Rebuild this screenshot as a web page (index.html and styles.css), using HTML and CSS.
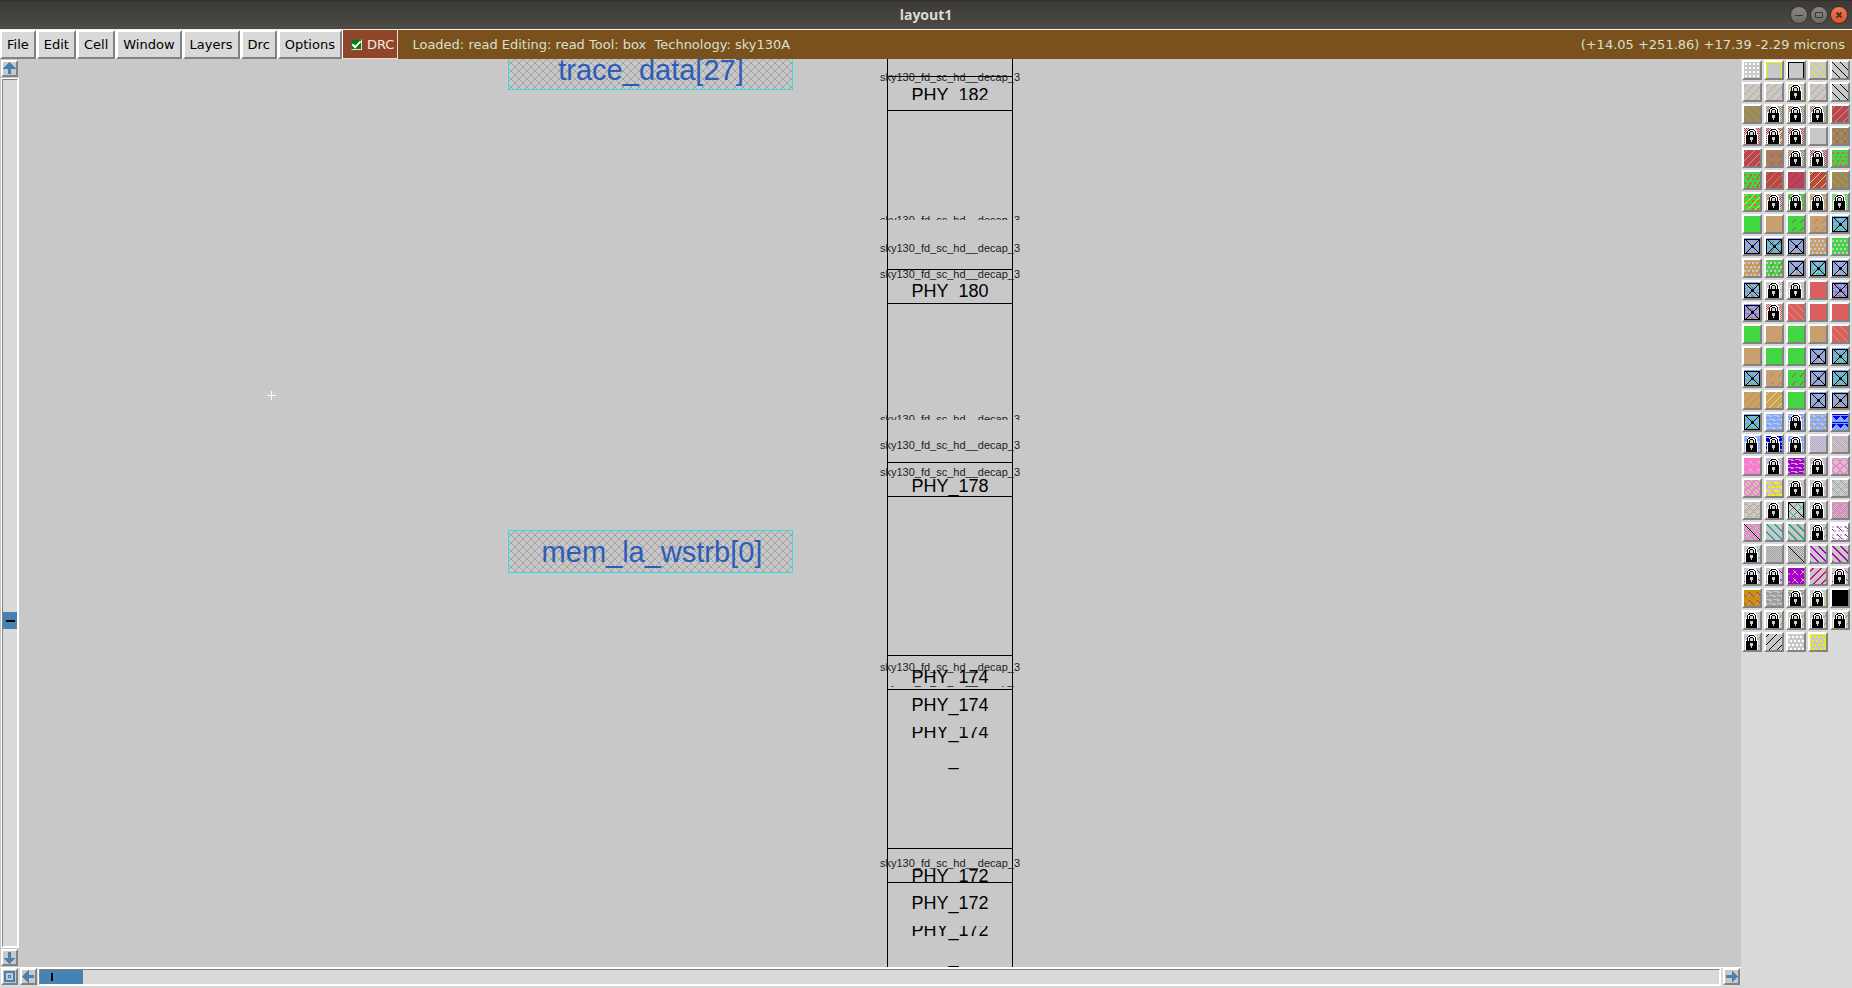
FILE: index.html
```html
<!DOCTYPE html>
<html lang="en">
<head>
<meta charset="utf-8">
<title>layout1</title>
<link rel="stylesheet" href="styles.css">
</head>
<body>
<div class="window">
  <header class="titlebar">
    <h1 class="title">layout1</h1>
    <div class="controls">
      <button class="ctl" aria-label="Minimize"><svg viewBox="0 0 16 16"><path d="M4 8.500H12"/></svg></button>
      <button class="ctl" aria-label="Maximize"><svg viewBox="0 0 16 16"><path d="M4.500 5.500h7v5h-7z"/></svg></button>
      <button class="ctl close" aria-label="Close"><svg viewBox="0 0 16 16"><path d="M5.500 5.500l5 5M10.500 5.500l-5 5"/></svg></button>
    </div>
  </header>
  <nav class="menubar">
    <button class="menu">File</button>
    <button class="menu">Edit</button>
    <button class="menu">Cell</button>
    <button class="menu">Window</button>
    <button class="menu">Layers</button>
    <button class="menu">Drc</button>
    <button class="menu">Options</button>
    <label class="drc"><input type="checkbox" class="check" checked>DRC</label>
    <div class="status"><span>Loaded: read Editing: read Tool: box&nbsp; Technology: sky130A</span><span>(+14.05 +251.86) +17.39 -2.29 microns</span></div>
  </nav>
  <main class="work">
    <section class="view">
      <div class="vscroll">
        <button class="arrow" aria-label="Scroll up"><svg viewBox="0 0 14 14"><path d="M7 0L14 7H9V13H5V7H0z"/></svg></button>
        <div class="trough vtrough"><div class="vthumb"></div></div>
        <button class="arrow" aria-label="Scroll down"><svg viewBox="0 0 14 14"><path d="M7 14L14 7H9V1H5V7H0z"/></svg></button>
      </div>
      <svg class="canvas">
        <defs>
          <pattern id="hatch" width="8" height="8" patternUnits="userSpaceOnUse"><path class="hatch" d="M-1 -1L9 9M9 -1L-1 9"/></pattern>
          <clipPath id="c1"><rect x="860" y="0" width="150" height="41"/></clipPath>
          <clipPath id="c2"><rect x="850" y="140" width="160" height="21"/></clipPath>
          <clipPath id="c3"><rect x="860" y="200" width="150" height="39"/></clipPath>
          <clipPath id="c4"><rect x="850" y="340" width="160" height="21"/></clipPath>
          <clipPath id="c5"><rect x="860" y="600" width="150" height="25"/></clipPath>
          <clipPath id="c6"><rect x="850" y="627" width="160" height="2"/></clipPath>
          <clipPath id="c7"><rect x="860" y="668" width="150" height="20"/></clipPath>
          <clipPath id="c8"><rect x="860" y="708" width="150" height="10"/></clipPath>
          <clipPath id="c9"><rect x="860" y="800" width="150" height="23"/></clipPath>
          <clipPath id="c10"><rect x="860" y="867" width="150" height="20"/></clipPath>
          <clipPath id="c11"><rect x="860" y="905" width="150" height="10"/></clipPath>
        </defs>
        <rect class="net" x="489.5" y="-12.500" width="284" height="43"/>
        <text class="netname" x="632" y="21">trace_data[27]</text>
        <rect class="net" x="489.5" y="471.500" width="284" height="42"/>
        <text class="netname" x="633" y="503">mem_la_wstrb[0]</text>
        <path class="cell" d="M868.500 0V2000M993.500 0V2000M868 17.500H994M868 51.500H994M868 210.500H994M868 244.500H994M868 403.500H994M868 437.500H994M868 596.500H994M868 630.500H994M868 789.500H994M868 823.500H994"/>
        <g class="def">
          <text x="931" y="22">sky130_fd_sc_hd__decap_3</text>
          <text x="931" y="165" clip-path="url(#c2)">sky130_fd_sc_hd__decap_3</text>
          <text x="931" y="193">sky130_fd_sc_hd__decap_3</text>
          <text x="931" y="219">sky130_fd_sc_hd__decap_3</text>
          <text x="931" y="364" clip-path="url(#c4)">sky130_fd_sc_hd__decap_3</text>
          <text x="931" y="390">sky130_fd_sc_hd__decap_3</text>
          <text x="931" y="417">sky130_fd_sc_hd__decap_3</text>
          <text x="931" y="612">sky130_fd_sc_hd__decap_3</text>
          <text x="931" y="626" clip-path="url(#c6)">sky130_fd_sc_hd__decap_3</text>
          <text x="931" y="808">sky130_fd_sc_hd__decap_3</text>
        </g>
        <g class="inst">
          <text x="931" y="42" clip-path="url(#c1)">PHY_182</text>
          <text x="931" y="238" clip-path="url(#c3)">PHY_180</text>
          <text x="931" y="433">PHY_178</text>
          <text x="931" y="624" clip-path="url(#c5)">PHY_174</text>
          <text x="931" y="652">PHY_174</text>
          <text x="931" y="679" clip-path="url(#c7)">PHY_174</text>
          <text x="931" y="706" clip-path="url(#c8)">PHY_174</text>
          <text x="931" y="823" clip-path="url(#c9)">PHY_172</text>
          <text x="931" y="850">PHY_172</text>
          <text x="931" y="877" clip-path="url(#c10)">PHY_172</text>
          <text x="931" y="904" clip-path="url(#c11)">PHY_172</text>
        </g>
        <path class="cursor" d="M252.500 332V341M248 336.500H257"/>
      </svg>
      <div class="hscroll">
        <button class="arrow" aria-label="Zoom to fit"><svg viewBox="0 0 14 14"><path fill-rule="evenodd" d="M1 1H13V13H1zM3 3V11H11V3zM5 5H9V9H5zM6 6V8H8V6z"/></svg></button>
        <button class="arrow" aria-label="Scroll left"><svg viewBox="0 0 14 14"><path d="M0 7L7 0V5H13V9H7V14z"/></svg></button>
        <div class="trough htrough"><div class="hthumb"></div></div>
        <button class="arrow" aria-label="Scroll right"><svg viewBox="0 0 14 14"><path d="M14 7L7 0V5H1V9H7V14z"/></svg></button>
      </div>
    </section>
    <aside class="palette" id="palette" aria-label="Layers"></aside>
  </main>
</div>
<script src="palette.js"></script>
</body>
</html>
```

FILE: styles.css
```css
* { box-sizing: border-box; }
body { margin: 0; background: #d9d9d9; font-family: "DejaVu Sans", sans-serif; font-size: 13px; color: #000; }
button { font: inherit; color: inherit; padding: 0; margin: 0; border-radius: 0; }
.window { display: flex; flex-direction: column; height: 100vh; overflow: hidden; }
.titlebar { flex: none; height: 29px; display: grid; grid-template-columns: 1fr auto 1fr; align-items: center; background: linear-gradient(#3b3a36, #4d4b45); border-top: 1px solid #32312e; }
.title { grid-column: 2; margin: 0; font: bold 14px/26px "Open Sans", sans-serif; color: #dfdbd2; }
.controls { justify-self: end; display: flex; gap: 4px; padding-right: 5px; }
.ctl { width: 16px; height: 16px; border: 0; border-radius: 50%; background: linear-gradient(#8a877f, #6c6a63); box-shadow: 0 0 0 1px #33322e; }
.ctl svg { display: block; width: 16px; height: 16px; fill: none; stroke: #3a3935; stroke-width: 1; }
.close { background: linear-gradient(#f47b56, #e2511f); }
.close svg { stroke-width: 2; }
.menubar { flex: none; display: flex; height: 30px; border-top: 1px solid #f0f0f0; background: #7a501c; }
.menu { flex: none; background: #d9d9d9; border: 2px solid; border-color: #fff #828282 #828282 #fff; padding: 0 5px; height: 29px; line-height: 24px; margin-right: 1px; box-shadow: 1px 0 0 #fff; }
.drc { flex: none; display: flex; align-items: center; gap: 5px; padding: 0 3px 0 8px; background: #8f4528; color: #f4e8e0; border-right: 1px solid #e8e0d8; border-bottom: 1px solid #e8e0d8; }
.check { appearance: none; width: 11px; height: 11px; margin: 0; background: #008000; border: 1px solid; border-color: #555 #ddd #ddd #555; display: grid; place-items: center; }
.check::before { content: ""; width: 7px; height: 3px; border-left: 2px solid #fff; border-bottom: 2px solid #fff; transform: translateY(-1px) rotate(-45deg); }
.status { flex: 1; display: flex; justify-content: space-between; align-items: center; padding: 0 7px 0 14px; color: #d5e0d0; white-space: nowrap; }
.work { flex: 1; min-height: 0; display: flex; }
.view { flex: 1; min-width: 0; display: grid; grid-template-columns: 19px 1fr; grid-template-rows: 1fr 21px; background: #c8c8c8; }
.vscroll { display: flex; flex-direction: column; align-items: flex-start; padding: 1px 0 1px 1px; gap: 1px; }
.arrow { flex: none; width: 17px; height: 17px; background: #c8c8c8; border: 2px solid; border-color: #fff #828282 #828282 #fff; }
.arrow svg { display: block; width: 13px; height: 13px; fill: #4682b4; shape-rendering: crispEdges; }
.trough { flex: 1; background: #d9d9d9; border: 1px solid; border-color: #828282 #fff #fff #828282; outline: 1px solid #fff; }
.vtrough { width: 16px; margin: 1px 0 1px 1px; display: flex; flex-direction: column; }
.vthumb { height: 17px; margin-top: 532px; background: #4682b4; display: grid; place-items: center; }
.vthumb::before { content: ""; width: 9px; height: 2px; background: #000; }
.canvas { width: 100%; height: 100%; min-height: 0; overflow: hidden; display: block; }
.hatch { stroke: #a2a2a2; stroke-width: 1; shape-rendering: crispEdges; }
.net { fill: url(#hatch); stroke: #30e0e0; stroke-width: 1; }
.netname { font: 29px "Liberation Sans", sans-serif; fill: #2c5cb8; text-anchor: middle; }
.cell { fill: none; stroke: #000; stroke-width: 1; }
.def { font: 11px "Liberation Sans", sans-serif; fill: #1c1c1c; text-anchor: middle; }
.inst { font: 18px "Liberation Sans", sans-serif; fill: #000; text-anchor: middle; }
.cursor { stroke: #fff; }
.hscroll { grid-column: 1 / -1; display: flex; gap: 2px; padding: 0 1px 2px; background: #d9d9d9; border-top: 1px solid #fff; }
.htrough { margin: 1px 1px 1px 0; }
.hthumb { width: 43px; height: 100%; background: #4682b4; padding: 3px 0 3px 11px; }
.hthumb::before { content: ""; display: block; width: 2px; height: 100%; background: #000; }
.palette { flex: none; display: grid; grid-template-columns: repeat(5, 20px); grid-auto-rows: 20px; gap: 2px; padding: 1px 2px 0 1px; background: #d9d9d9; align-content: start; }
.swatch { width: 20px; height: 20px; border: 2px solid; border-color: #fff #828282 #828282 #fff; background: #d9d9d9; }
.swatch svg { display: block; width: 16px; height: 16px; shape-rendering: crispEdges; }
```

FILE: palette.js
```js
// Each swatch is a base colour followed by stipple layers: <shape><colour>.
const colors = {
  G: '#c8c8c8', N: '#c8a070', B: '#a88060', E: '#42d642', R: '#b84550', S: '#dc5f5f',
  U: '#82a8ff', V: '#0000e8', P: '#a800c8', K: '#ff78d0', Y: '#f0f000', T: '#20a8a0',
  I: '#c0a8d8', A: '#a0a0a0', M: '#d01090', O: '#c89010', Z: '#000', W: '#fff'
};
const rows = [
  'G gW|G fY|G fZ|G dY|G dZ',
  'G uN|G uN|G dY l|G uN|G dZ',
  'B dE|G kB aE l|G kB aE l|G kB aE l|R uN',
  'G kR l|G kR aY l|G kR l|G|B aR bE',
  'R uN|B aR|G kB aE l|G kR l|E sS',
  'E sS aR|R uO|R uM|R uY|B uO dE',
  'E sS uY|G kB aM l|E sS l|N uG l|G kE l',
  'E|N|E aR|N aB|U wE x',
  'U wN x|U wE aR x|U wN x|N hG|E hG',
  'N hG aB|E hG aR|U wN aG x|U wE aG x|U wN aG x',
  'U wE aG bR x|G aW l|G l|S|U wS x',
  'U wS aN x|G kS l|S dN|S|S',
  'E|N|E|N|S dN',
  'N|E|E|U wN x|U wE x',
  'U wE aK x|N aB|E aR|U wN x|U wE x',
  'N uO|N uY|E|U wN x|U wN aO x',
  'U wE x|U wG|U wG l|U wG dN|U tV',
  'U wG l|V wU l|U wG l|G kI|G kI dN',
  'K aG bG|G kI l|P wI|G kI l|G oK',
  'G oK dN|G sY hY bK|G aK l|G aK l|G uA dA',
  'G uA dN|G l|G uT dT zZ fZ|G l|G kA oK',
  'G kA oK zZ|G dT iT|G dT iT eN|G aT l|W hG bP',
  'G aT l|G kA|G kA zZ|G dP iP|G dP iP eN',
  'G bP l|G bP l|P aK bG|G uM jM|G bM l',
  'O aA bM|A wG|A wG l|G bY l|Z',
  'G l|G aO l|G aO l|G aO l|G aO l',
  'G aO l|G uZ|G hW|G hY fY'
];
const rect = (x, y, w, h) => `M${x} ${y}h${w}v${h}h${-w}z`;

// Pixel coordinates that satisfy a test, as one filled path.
function plot(test) {
  let d = '';
  for (let y = 0; y < 16; y++) for (let x = 0; x < 16; x++) if (test(x, y)) d += rect(x, y, 1, 1);
  return d;
}
const shapes = {
  g: plot((x, y) => (x + 3) % 4 < 2 && (y + 3) % 4 < 2),
  h: plot((x, y) => (x + (y & 4 ? 2 : 0)) % 4 < 2 && y % 4 > 1),
  s: plot((x, y) => (x + (y & 4 ? 2 : 0)) % 5 < 2 && y % 4 > 1),
  d: plot((x, y) => (x - y + 16) % 8 === 0),
  e: plot((x, y) => (x - y + 16) % 8 === 2),
  i: plot((x, y) => (x - y + 16) % 8 === 1),
  u: plot((x, y) => (x + y) % 8 === 2),
  j: plot((x, y) => (x + y) % 8 === 3),
  a: plot((x, y) => (x + y) % 8 === 2 && y % 8 > 2 && y % 8 < 7),
  b: plot((x, y) => (x - y + 16) % 8 === 3 && y % 8 > 1 && y % 8 < 7),
  k: plot((x, y) => (x + y) % 2 === 0),
  w: plot((x, y) => y % 4 === 1 && (x + y) % 8 < 6 || y % 4 === 2 && (x + y) % 8 > 4),
  t: plot((x, y) => y % 8 < 1 || (y % 8 > 1 && y % 8 < 6 && Math.abs((x + (y & 8 ? 4 : 0)) % 8 - 4) < 6 - y % 8)),
  o: plot((x, y) => { const r = Math.hypot((x % 8) - 3.5, (y % 8) - 3.5); return r > 2.8 && r < 4.3; }),
  z: plot((x, y) => x === y),
  f: rect(0, 0, 16, 1) + rect(0, 0, 1, 16) + rect(15, 0, 1, 16),
  x: plot((x, y) => y === 1 || y === 15 || (y > 1 && (x === 0 || x === 15 || x === y || x === 16 - y)) ||
    (x > 6 && x < 10 && y > 6 && y < 10))
};
const lock = '<path fill="#fff" d="M4 1h1V0h6v1h1v1h1v4h1v10H1V6h2V2h1z"/>' +
  '<path d="M5 1h5v1h1v1h1v4h1v9H2V7h1V3h1V2h1z"/>' +
  '<path fill="#fff" d="M5 3h1V2h4v1h1v4H9V4H6v3H4V3z"/>' +
  '<path d="M5 4h1V3h3v1h1v3H9V4H6v3H5z"/>' +
  '<path fill="#d0d0d0" d="M6 4h3v3H6zM6 9h3v3H8v2H7v-2H6z"/>';

function icon(spec) {
  const [base, ...layers] = spec.split(' ');
  let out = `<rect width="16" height="16" fill="${colors[base]}"/>`;
  for (const layer of layers) {
    if (layer === 'l') out += lock;
    else if (layer === 'x') out += `<path d="${shapes.x}"/>`;
    else out += `<path fill="${colors[layer[1]]}" d="${shapes[layer[0]]}"/>`;
  }
  return `<svg viewBox="0 0 16 16">${out}</svg>`;
}
document.getElementById('palette').innerHTML = rows.flatMap(r => r.split('|'))
  .map((s, i) => `<button class="swatch" aria-label="Layer ${i + 1}">${icon(s)}</button>`).join('');
```
